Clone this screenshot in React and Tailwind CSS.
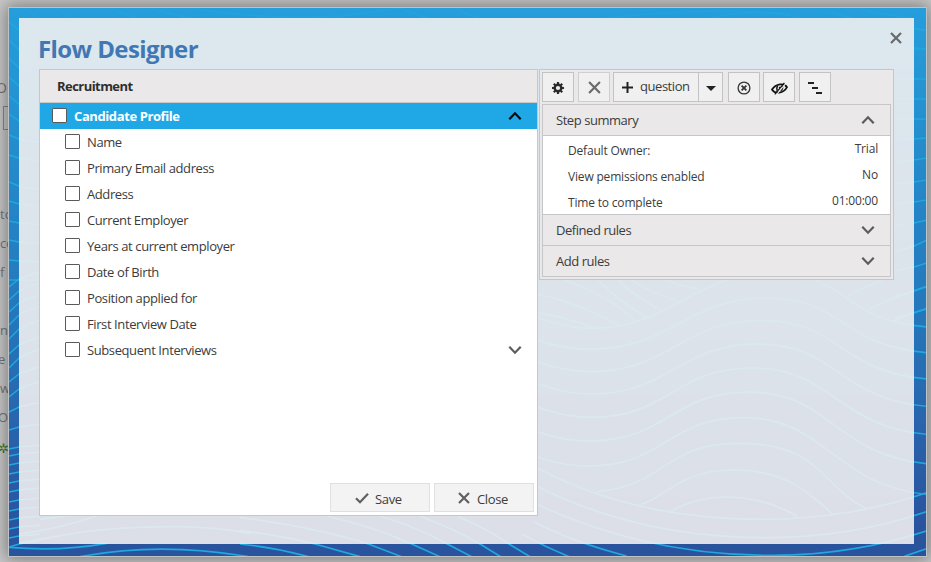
const FIELDS = [
  "Name",
  "Primary Email address",
  "Address",
  "Current Employer",
  "Years at current employer",
  "Date of Birth",
  "Position applied for",
  "First Interview Date",
  "Subsequent Interviews",
];

const SUMMARY = [
  ["Default Owner:", "Trial"],
  ["View pemissions enabled", "No"],
  ["Time to complete", "01:00:00"],
];

// Each entry: start y, trough x/y, crest x/y, end y
const SWELLS = [
  [125, 170, 157, 705, -8, 153],
  [192, 165, 220, 690, 66, 230],
  [258, 165, 287, 675, 133, 309],
  [323, 165, 354, 665, 204, 391],
  [394, 165, 424, 650, 276, 475],
  [467, 160, 495, 640, 348, 563],
  [543, 155, 570, 625, 425, 655],
];

// [y at the outer edge, y at the inner edge]
const LEFT_LINES = [
  [22, 30], [40, 50], [58, 68], [77, 86], [96, 104], [114, 121], [135, 139], [155, 158],
  [182, 186], [201, 204], [221, 223], [240, 242], [260, 261], [280, 280], [287, 279],
  [300, 291], [312, 303], [325, 315], [339, 329], [354, 345], [368, 358], [382, 374],
  [397, 389], [412, 407], [430, 427], [449, 447], [456, 454], [465, 463], [474, 472],
  [483, 481], [492, 490], [502, 500], [511, 509], [520, 518], [529, 527], [538, 536], [547, 544],
];

const RIGHT_LINES = [
  [29, 30], [49, 49], [79, 79], [99, 99], [119, 119], [139, 138], [160, 158], [182, 180],
  [202, 200], [223, 220], [246, 240], [267, 263], [291, 286], [313, 308],
];

function Waves() {
  return (
    <svg className="absolute inset-0 h-full w-full" viewBox="9 8 917 548" preserveAspectRatio="none" fill="none" stroke="#1fa8e1">
      <g transform="translate(536 276) scale(0.33333)" strokeWidth="5">
        {SWELLS.map(([s, tx, ty, cx, cy, e]) => (
          <path key={s} d={`M5 ${s} C60 ${s + 20} 110 ${ty} ${tx} ${ty} C${tx + 235} ${ty} ${cx - 235} ${cy} ${cx} ${cy} C${cx + 240} ${cy} 900 ${e - 25} 1172 ${e}`} />
        ))}
        <path d="M180 648C400 625 380 502 610 502C860 502 860 640 995 700" />
        <path d="M315 685C390 665 430 582 590 582C740 582 810 640 890 715" />
        <path d="M405 705Q480 663 575 663Q690 665 785 722" />
        <path d="M5 577C200 680 420 730 680 730C850 730 1030 700 1172 650" />
        <path d="M5 632C200 730 420 785 690 785C870 785 1030 755 1172 707" />
        <path d="M-5 682C200 775 420 838 710 838C900 838 1050 805 1172 765" />
        <path d="M-5 738Q110 798 272 840M-40 775Q30 815 100 842M1105 841L1172 818" />
        <path d="M5 55Q130 80 250 150M5 110Q90 125 175 155M70 5Q220 60 300 135M180 5Q250 80 335 125M240 5Q290 60 380 105M275 5Q340 50 425 75M375 5Q430 30 485 38" />
        <path d="M935 60Q980 35 1040 12M1000 100Q1080 60 1172 32M1075 135Q1120 112 1172 99" />
      </g>
      <g transform="translate(240 480) scale(0.33333)" strokeWidth="5">
        <path d="M0 112Q240 145 385 192L485 230M0 152Q120 165 225 192L360 230M0 192Q100 202 205 230" />
        <path d="M260 108Q400 140 515 192L600 230M420 108Q540 145 622 192L695 230M540 108Q650 150 720 192L782 230M650 108Q740 145 807 192L870 230" />
      </g>
      <g transform="translate(0 360) scale(0.33333)" strokeWidth="5">
        <path d="M57 522Q170 508 290 468M57 550C180 530 250 500 540 500Q650 502 750 520M27 562Q180 575 320 550M240 590Q480 545 745 590M120 478Q240 460 300 466" />
      </g>
      <g strokeWidth="1.4">
        {LEFT_LINES.map(([a, b]) => (
          <path key={a} d={`M9 ${a}L19 ${b}Q30 ${b + (b - a) * 0.6} 40 ${b + (b - a) * 0.9}`} />
        ))}
        {RIGHT_LINES.map(([a, b]) => (
          <path key={a} d={`M895 ${a + (a - b)}L914 ${a}L927 ${b}`} />
        ))}
      </g>
      <g strokeWidth="1.4" strokeOpacity="0.6">
        <path d="M25 8Q60 40 130 62M55 8Q100 35 200 55M110 8Q160 30 260 44M150 8Q220 28 330 36M190 8Q260 20 340 16Q390 10 400 8M400 8Q460 30 560 70M455 8Q500 30 620 60M490 42Q620 50 720 16Q760 8 800 18Q860 40 926 49M590 20Q700 6 790 14M820 8Q860 24 926 30M860 8Q880 15 914 18" />
      </g>
    </svg>
  );
}

function Chevron({ up, color = "#5c5c5c" }) {
  return (
    <svg className="block" width="14" height="10" viewBox="0 0 14 10" fill="none" stroke={color} strokeWidth="2.2">
      <path d={up ? "M1.3 8.2L7 2.3L12.7 8.2" : "M1.3 1.8L7 7.7L12.7 1.8"} />
    </svg>
  );
}

function Cross({ size, color = "#666", width = 2.2 }) {
  return (
    <svg width={size} height={size} viewBox="0 0 12 12" fill="none" stroke={color} strokeWidth={width}>
      <path d="M1 1L11 11M11 1L1 11" />
    </svg>
  );
}

function Checkbox() {
  return <span className="mb-0.5 h-[15px] w-[15px] shrink-0 rounded-[1px] border border-[#5a5a5a] bg-white" />;
}

function Toolbar() {
  return (
    <div className="flex pt-0.5 pl-0.5">
      <div className="flex h-[30px] w-8 items-center justify-center border border-[#c4c3c4] bg-[#f0f0f0]">
        <svg className="mt-0.5" width="12" height="12" viewBox="0 0 12 12" fill="none" stroke="#2b2b2b">
          <circle cx="6" cy="6" r="3.3" strokeWidth="2.4" />
          <path strokeWidth="2.2" d="M6 0V2M6 10V12M0 6H2M10 6H12M1.8 1.8L3.2 3.2M8.8 8.8L10.2 10.2M1.8 10.2L3.2 8.8M8.8 3.2L10.2 1.8" />
        </svg>
      </div>
      <div className="ml-1 flex h-[30px] w-8 items-center justify-center border border-[#d0cfd0] bg-[#f0f0f0] pt-px">
        <Cross size={13} color="#6b6b6b" width={2} />
      </div>
      <div className="ml-[3px] flex h-[30px] w-[110px] border border-[#c4c3c4] bg-[#f0f0f0]">
        <div className="flex w-[85px] items-center border-r border-[#c4c3c4] pl-2">
          <svg width="11" height="11" viewBox="0 0 11 11" stroke="#222" strokeWidth="2">
            <path d="M5.5 0V11M0 5.5H11" />
          </svg>
          <span className="ml-[7px] pb-0.5 text-[13px] leading-4 tracking-[-0.45px]">question</span>
        </div>
        <div className="flex flex-1 items-center justify-center pt-0.5">
          <svg width="10" height="5" viewBox="0 0 10 5" fill="#222"><path d="M0 0H10L5 5Z" /></svg>
        </div>
      </div>
      <div className="ml-[5px] flex h-[30px] w-8 items-center justify-center border border-[#c4c3c4] bg-[#f0f0f0] pt-0.5">
        <svg width="14" height="14" viewBox="0 0 14 14" fill="none" stroke="#333">
          <circle cx="7" cy="7" r="5.9" strokeWidth="1.3" />
          <path strokeWidth="1.7" d="M4.6 4.6L9.4 9.4M9.4 4.6L4.6 9.4" />
        </svg>
      </div>
      <div className="ml-[3px] flex h-[30px] w-8 items-center justify-center border border-[#c4c3c4] bg-[#f0f0f0] pt-0.5">
        <svg width="17" height="13" viewBox="0 0 17 13" fill="none" stroke="#111">
          <path strokeWidth="1.8" d="M1 7.6C3 4.4 6 2.8 9 2.4C12 2.1 14.6 2.8 16 5.2C14.2 8.6 11.4 10.2 8.2 10.6C5 10.9 2.4 10 1 7.6Z" />
          <path strokeWidth="1.5" d="M6.6 3.8C5.4 5.6 5.4 7.4 6.2 8.8M11.2 3.8C12 5.6 11.2 7.8 9.4 9M8 6L9.4 5" />
          <path stroke="#f0f0f0" strokeWidth="1.1" d="M5.4 12.6L14.6 1.6" />
          <path strokeWidth="1.2" d="M3.8 12.4L13.4 0.8" />
        </svg>
      </div>
      <div className="ml-1 flex h-[30px] w-8 items-center justify-center border border-[#c4c3c4] bg-[#f0f0f0] pt-0.5">
        <svg width="14" height="12" viewBox="0 0 14 12" fill="#222">
          <path d="M0 0H6V2H0ZM4 5H10V7H4ZM8 10H14V12H8Z" />
        </svg>
      </div>
    </div>
  );
}

function Section({ title, up, last }) {
  return (
    <div className={last ? "flex h-[30px] items-center justify-between pl-[13px] pr-[15px]" : "flex h-[31px] items-center justify-between border-b border-[#c6c5c8] pl-[13px] pr-[15px]"}>
      <span className="pt-0.5 text-[13px] tracking-[-0.45px]">{title}</span>
      <Chevron up={up} />
    </div>
  );
}

export default function App() {
  return (
    <div className="relative h-[562px] w-[931px] overflow-hidden bg-[#c9c9c9] pt-[7px] pl-2 font-['Open_Sans','Noto_Sans',sans-serif] text-[13px] text-[#3c3c3c]">
      <div className="absolute top-0 left-0 h-full w-8 text-[13px] leading-[29px] text-[#777]">
        <div className="-ml-1 pt-[73px] text-sm leading-[29px]">OI</div>
        <div className="mt-1 ml-[3px] h-6 w-10 border border-[#888]" />
        <div className="mt-[70px]">to</div>
        <div>co</div>
        <div>f</div>
        <div className="mt-[29px]">n</div>
        <div className="-ml-0.5">e d</div>
        <div>w</div>
        <div className="-ml-0.5">O</div>
        <div className="-ml-0.5 pt-0.5 text-[#3f7d2c]">✲</div>
      </div>

      <div className="relative h-[550px] w-[919px] border border-[#bfc3c6] bg-linear-to-b from-[#259edb] via-[#2478bb] via-55% to-[#2a539e] to-95% shadow-[0_0_16px_2px_rgba(0,0,0,0.4)]">
        <Waves />
        <div className="relative mt-2.5 ml-2.5 h-[526px] w-[895px] bg-[rgba(243,240,240,0.89)] pl-5">
          <div className="flex h-[51px] justify-between">
            <h1 className="-ml-px pt-[13px] text-2xl leading-9 font-bold tracking-[-0.6px] text-[#4178b3]">Flow Designer</h1>
            <div className="pt-[14px] pr-3"><Cross size={12} color="#68696c" width={2.2} /></div>
          </div>

          <div className="flex items-start">
            <div className="flex h-[447px] w-[499px] flex-col border border-[#c6c7ca] bg-white">
              <div className="flex h-[33px] items-center border-b border-[#c9c9c9] bg-[#eae8e9] pt-px pl-[17px] font-bold tracking-[-0.55px] text-[#2f2f2f]">Recruitment</div>
              <div className="flex h-[26px] items-center bg-[#1fa8e5] pr-[15px] pl-3 font-bold text-white">
                <Checkbox />
                <span className="ml-[7px] flex-1 pt-0.5 tracking-[-0.4px]">Candidate Profile</span>
                <Chevron up color="#0b0b0b" />
              </div>
              {FIELDS.map((f, i) => (
                <div key={f} className="flex h-[26px] items-center pr-[15px] pl-[25px]">
                  <Checkbox />
                  <span className="ml-[7px] flex-1 pt-0.5 tracking-[-0.4px]">{f}</span>
                  {i === FIELDS.length - 1 && <Chevron />}
                </div>
              ))}
              <div className="mt-auto mb-[3px] flex justify-end gap-1 pr-[3px]">
                <div className="flex h-[29px] w-[100px] items-center border border-[#e0e0e0] bg-[#f3f3f3] pl-6">
                  <svg width="14" height="12" viewBox="0 0 14 12" fill="none" stroke="#606060" strokeWidth="2.2"><path d="M1 6.2L5 10.2L13 1.8" /></svg>
                  <span className="ml-[6px] pt-1 tracking-[-0.35px]">Save</span>
                </div>
                <div className="flex h-[29px] w-[100px] items-center border border-[#e0e0e0] bg-[#f3f3f3] pl-[23px]">
                  <Cross size={12} color="#606060" />
                  <span className="ml-[7px] pt-1 tracking-[-0.35px]">Close</span>
                </div>
              </div>
            </div>

            <div className="ml-px h-[211px] w-[355px] border border-[#c6c5c8] bg-[#eae8e9]">
              <Toolbar />
              <div className="mt-0.5 ml-0.5 w-[349px] border border-[#c6c5c8]">
                <Section title="Step summary" up />
                <div className="h-[79px] border-b border-[#c6c5c8] bg-white pr-3 pl-[25px] text-xs tracking-[-0.18px]">
                  {SUMMARY.map(([k, v]) => (
                    <div key={k} className="flex h-[26px] justify-between leading-[26px]">
                      <span className="pt-0.5">{k}</span>
                      <span>{v}</span>
                    </div>
                  ))}
                </div>
                <Section title="Defined rules" />
                <Section title="Add rules" last />
              </div>
            </div>
          </div>
        </div>
      </div>
    </div>
  );
}
